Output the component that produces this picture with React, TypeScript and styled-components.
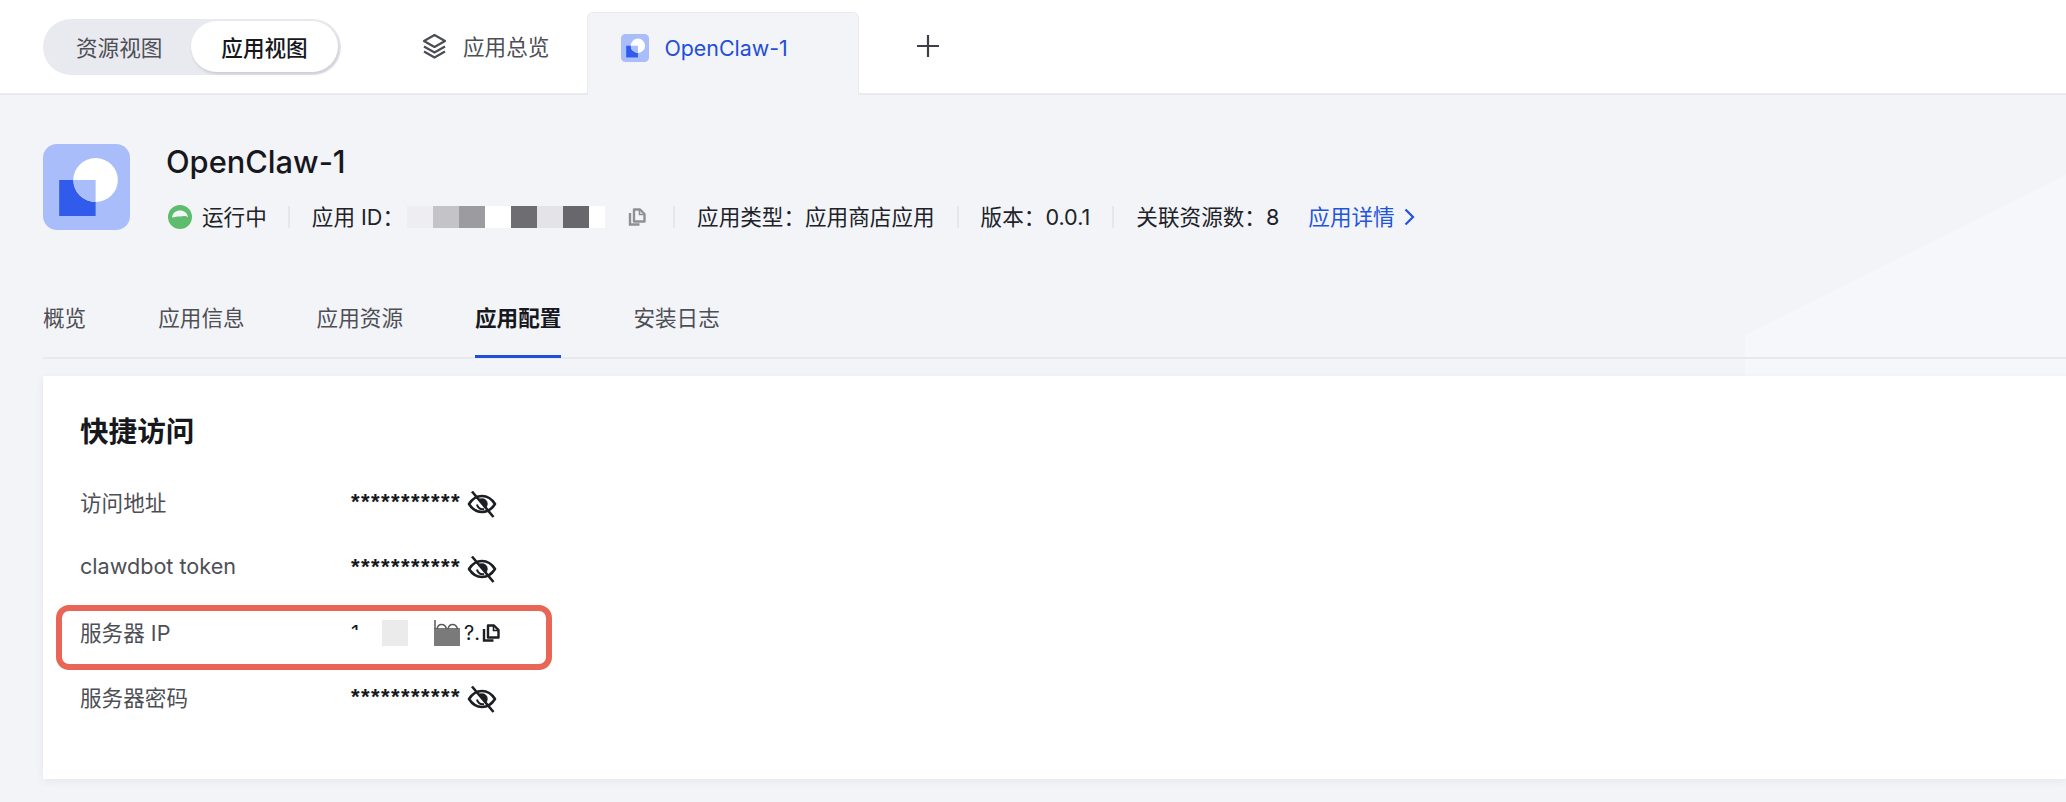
import React from "react";
import styled, { createGlobalStyle } from "styled-components";

const GlobalStyle = createGlobalStyle`
  html, body {
    margin: 0;
    padding: 0;
    background: #f3f4f8;
  }
  body {
    font-family: Inter, "Noto Sans CJK SC", "Noto Sans", sans-serif;
    color: #16181d;
    overflow: hidden;
  }
`;

const Page = styled.div`
  position: relative;
  width: 2066px;
  height: 802px;
  overflow: hidden;
  background: #f3f4f8;
`;

const Decor = styled.div`
  position: absolute;
  left: 0;
  top: 0;
  width: 2066px;
  height: 376px;
  background: #f6f7fb;
  clip-path: polygon(1745px 335px, 2066px 175px, 2066px 376px, 1745px 376px);
`;

const TopBar = styled.header`
  position: relative;
  display: flex;
  align-items: flex-start;
  height: 93px;
  padding-left: 43px;
  background: #fff;
  border-bottom: 2px solid #e9eaef;
`;

const Segment = styled.div`
  display: flex;
  justify-content: space-between;
  align-items: center;
  box-sizing: border-box;
  width: 298px;
  height: 56px;
  margin-top: 19px;
  padding: 2px 3px 3px 33px;
  border-radius: 28px;
  background: #e9eaef;
`;

const SegmentItem = styled.div<{ $active?: boolean }>`
  display: flex;
  align-items: center;
  justify-content: center;
  height: 100%;
  font-size: 21.6px;
  font-weight: ${(p) => (p.$active ? 500 : 400)};
  color: ${(p) => (p.$active ? "#16181d" : "#4d4f55")};
  ${(p) =>
    p.$active &&
    `
    width: 147px;
    border-radius: 26px;
    background: #fff;
    box-shadow: 1px 2px 3px rgba(90, 95, 115, 0.22);
  `}
`;

const NavItem = styled.div`
  display: flex;
  align-items: center;
  gap: 16px;
  height: 91px;
  margin-left: 81px;
  font-size: 21.6px;
  color: #4d4f55;
`;

const Tab = styled.div`
  display: flex;
  align-items: center;
  gap: 15px;
  box-sizing: border-box;
  width: 272px;
  height: 83px;
  margin: 12px 0 -2px 38px;
  padding: 0 0 13px 33px;
  border: 1px solid #e9eaef;
  border-bottom: none;
  border-radius: 6px 6px 0 0;
  background: #f3f4f8;
  font-size: 21.4px;
  color: #1f4fd8;
`;

const AddButton = styled.div`
  display: flex;
  align-items: center;
  height: 92px;
  margin-left: 58px;
  color: #3c3f45;
`;

const Summary = styled.section`
  position: relative;
  display: flex;
  gap: 36px;
  padding: 49px 43px 0;
`;

const SummaryText = styled.div`
  display: flex;
  flex-direction: column;
`;

const AppName = styled.h1`
  margin: 0;
  height: 36px;
  font-size: 30.8px;
  font-weight: 500;
  line-height: 36px;
  color: #16181d;
`;

const MetaRow = styled.div`
  display: flex;
  align-items: center;
  height: 24px;
  margin-top: 25px;
  margin-left: 2px;
  font-size: 21.6px;
  line-height: 24px;
  white-space: nowrap;
`;

const MetaItem = styled.span`
  display: flex;
  align-items: center;
  color: #202227;
`;

const StatusItem = styled(MetaItem)`
  margin-right: -1px;
`;

const Separator = styled.span`
  width: 2px;
  height: 22px;
  margin: 0 22px;
  background: #e6e7ec;
`;

const StatusIcon = styled.svg`
  margin-right: 10px;
`;

const MaskedId = styled.span`
  display: grid;
  grid-template-columns: repeat(7, 26px) 16px;
  height: 22px;
  margin-left: 3px;
`;

const MaskCell = styled.span<{ $color: string }>`
  background: ${(p) => p.$color};
`;

const CopyButton = styled.span<{ $muted?: boolean; $gap: number }>`
  display: inline-flex;
  margin-left: ${(p) => p.$gap}px;
  margin-right: ${(p) => (p.$muted ? 5 : 0)}px;
  color: ${(p) => (p.$muted ? "#8e9096" : "#1c1e22")};
`;

const DetailLink = styled.a`
  display: flex;
  align-items: center;
  gap: 9px;
  margin-left: 29px;
  color: #1f55dc;
`;

const TabNav = styled.nav`
  position: relative;
  display: flex;
  gap: 72px;
  height: 76px;
  margin: 51px 0 0 43px;
  border-bottom: 2px solid #e8e9ee;
`;

const TabLink = styled.a<{ $active?: boolean }>`
  position: relative;
  display: flex;
  align-items: center;
  box-sizing: border-box;
  height: 76px;
  padding-bottom: 5px;
  font-size: 21.6px;
  font-weight: ${(p) => (p.$active ? 600 : 400)};
  color: ${(p) => (p.$active ? "#16181d" : "#4d4f55")};
  ${(p) =>
    p.$active &&
    `
    &::after {
      content: "";
      position: absolute;
      left: 0;
      right: 0;
      bottom: -1px;
      height: 3px;
      background: #1f4fd8;
    }
  `}
`;

const Card = styled.section`
  position: relative;
  box-sizing: border-box;
  height: 403px;
  margin: 17px 0 0 43px;
  padding: 37px 37px 0;
  background: #fff;
  box-shadow: 0 2px 8px rgba(60, 70, 110, 0.07);
`;

const CardTitle = styled.h2`
  margin: 0 0 19px;
  height: 38px;
  font-size: 28.6px;
  font-weight: 600;
  line-height: 38px;
  color: #16181d;
`;

const Row = styled.div`
  display: flex;
  align-items: center;
  height: 65px;
  font-size: 21.6px;
`;

const RowLabel = styled.div`
  width: 271px;
  padding-bottom: 3px;
  color: #4d4f55;
`;

const RowValue = styled.div`
  display: flex;
  align-items: center;
  color: #16181d;
`;

const Stars = styled.span`
  width: 110px;
  margin-bottom: 2px;
  font-family: "Liberation Sans", sans-serif;
  font-size: 22px;
  font-weight: 700;
  letter-spacing: 1.44px;
  line-height: 24px;
  white-space: nowrap;
`;

const EyeButton = styled.span`
  display: inline-flex;
  margin-left: 6px;
  margin-top: 3px;
  color: #1c1e22;
`;

const MaskedIp = styled.span`
  display: grid;
  grid-template-columns: 6px 25px 26px 26px 26px 14px;
  align-items: center;
  width: 123px;
  height: 26px;
`;

// mosaic covers all but the top of the first digit
const IpFragment = styled.span`
  position: relative;
  font-size: 20px;
  line-height: 26px;
  color: #16181d;

  &::after {
    content: "";
    position: absolute;
    left: -1px;
    right: -4px;
    top: 10px;
    bottom: 0;
    background: #fff;
  }
`;

const IpTail = styled.span`
  padding-left: 4px;
  font-size: 20px;
  line-height: 26px;
  white-space: nowrap;
  color: #16181d;
`;

const IpCell = styled.span<{ $color: string }>`
  height: 26px;
  background: ${(p) => p.$color};
`;

const Highlight = styled.div`
  position: absolute;
  left: 13px;
  top: 229px;
  box-sizing: border-box;
  width: 496px;
  height: 65px;
  border: 6px solid #e96555;
  border-radius: 13px;
  pointer-events: none;
`;

const AppLogo = ({ width, height }: { width: number; height: number }) => (
  <svg width={width} height={height} viewBox="0 0 86 86" fill="none" preserveAspectRatio="none">
    <rect width="86" height="86" rx="14" fill="#a9bdfb" />
    <rect x="16" y="36" width="36" height="36" fill="#315bea" />
    <circle cx="52" cy="36" r="22" fill="#fff" />
    <path d="M30 36h22v22a22 22 0 0 1-22-22z" fill="#a9bdfb" />
  </svg>
);

const LayersIcon = () => (
  <svg width="25" height="26" viewBox="0 0 25 26" fill="none" stroke="#4a4d53" strokeWidth="2.2">
    <path d="M12.5 2 23 8 12.5 14 2 8z" strokeLinejoin="round" />
    <path d="M2 13.5 12.5 19.5 23 13.5" />
    <path d="M2 18.5 12.5 24.5 23 18.5" />
  </svg>
);

const PlusIcon = () => (
  <svg width="22" height="22" viewBox="0 0 22 22" stroke="currentColor" strokeWidth="2.2">
    <path d="M11 0v22M0 11h22" />
  </svg>
);

const CopyIcon = ({ size }: { size: number }) => (
  <svg width={size} height={size} viewBox="0 0 18 18" fill="none" stroke="currentColor" strokeWidth="2.4">
    <path d="M6 1.5h6l4.5 4.5v7.5H6z" strokeLinejoin="round" />
    <path d="M2 5v11.5h9.5" />
    <path d="M11.5 1.5v5h5" strokeWidth="1.6" />
  </svg>
);

const EyeOffIcon = () => (
  <svg width="30" height="30" viewBox="0 0 30 30" fill="none" stroke="currentColor">
    <path d="M2 15c3.5-5.5 8-8 13-8s9.5 2.5 13 8c-3.5 5.5-8 8-13 8s-9.5-2.5-13-8z" strokeWidth="2.6" strokeLinejoin="round" />
    <path d="M15 9.5a5.5 5.5 0 0 1 4.5 8.7l-8-7.5a5.5 5.5 0 0 1 3.5-1.2z" fill="currentColor" strokeWidth="0.5" />
    <path d="M10 15.5a5.5 5.5 0 0 0 7 4.5" strokeWidth="2" />
    <path d="M5 2.5 26.5 28" strokeWidth="2.6" />
  </svg>
);

// the part of the address left showing above the dark mosaic cell
const DarkIpCell = () => (
  <svg width="26" height="26" viewBox="0 0 26 26" fill="none">
    <rect y="8" width="26" height="18" fill="#7a7a7a" />
    <path d="M1 0v9M3 9c1-6 8-6 9.5 0M14 9c1-6 8-6 9.5 0" stroke="#5a5a5a" strokeWidth="1.5" />
  </svg>
);

const ID_CELLS = ["#eeeef2", "#c4c4c8", "#9c9ca0", "#ffffff", "#6e6e72", "#e4e4e8", "#68686c", "#ffffff"];
const SECRET_ROWS = ["访问地址", "clawdbot token"];
const TABS = ["概览", "应用信息", "应用资源", "应用配置", "安装日志"];

const SecretRow = ({ label }: { label: string }) => (
  <Row>
    <RowLabel>{label}</RowLabel>
    <RowValue>
      <Stars>***********</Stars>
      <EyeButton>
        <EyeOffIcon />
      </EyeButton>
    </RowValue>
  </Row>
);

export default function App() {
  return (
    <Page>
      <GlobalStyle />
      <Decor />
      <TopBar>
        <Segment>
          <SegmentItem>资源视图</SegmentItem>
          <SegmentItem $active>应用视图</SegmentItem>
        </Segment>
        <NavItem>
          <LayersIcon />
          应用总览
        </NavItem>
        <Tab>
          <AppLogo width={28} height={28} />
          OpenClaw-1
        </Tab>
        <AddButton>
          <PlusIcon />
        </AddButton>
      </TopBar>

      <Summary>
        <AppLogo width={87} height={86} />
        <SummaryText>
          <AppName>OpenClaw-1</AppName>
          <MetaRow>
            <StatusItem>
              <StatusIcon width="24" height="24" viewBox="0 0 24 24">
                <circle cx="12" cy="12" r="12" fill="#5dbd6c" />
                <path d="M4 12.5C4.5 8 8 5.5 12 5.5s7.5 2.5 8 7c-2.5-2.5-5.5-1-8-1s-5.5.5-8 1z" fill="#f3f4f8" />
              </StatusIcon>
              运行中
            </StatusItem>
            <Separator />
            <MetaItem>
              应用 ID：
              <MaskedId>
                {ID_CELLS.map((color, i) => (
                  <MaskCell key={i} $color={color} />
                ))}
              </MaskedId>
              <CopyButton $muted $gap={23}>
                <CopyIcon size={18} />
              </CopyButton>
            </MetaItem>
            <Separator />
            <MetaItem>应用类型：应用商店应用</MetaItem>
            <Separator />
            <MetaItem>版本：0.0.1</MetaItem>
            <Separator />
            <MetaItem>关联资源数：8</MetaItem>
            <DetailLink>
              应用详情
              <svg width="11" height="18" viewBox="0 0 11 18" fill="none" stroke="currentColor" strokeWidth="2.2">
                <path d="M1.5 1.5 9 9l-7.5 7.5" />
              </svg>
            </DetailLink>
          </MetaRow>
        </SummaryText>
      </Summary>

      <TabNav>
        {TABS.map((tab) => (
          <TabLink key={tab} $active={tab === "应用配置"}>
            {tab}
          </TabLink>
        ))}
      </TabNav>

      <Card>
        <CardTitle>快捷访问</CardTitle>
        {SECRET_ROWS.map((label) => (
          <SecretRow key={label} label={label} />
        ))}
        <Row>
          <RowLabel>服务器 IP</RowLabel>
          <RowValue>
            <MaskedIp>
              <IpFragment>1</IpFragment>
              <IpCell $color="#ffffff" />
              <IpCell $color="#ebebeb" />
              <IpCell $color="#ffffff" />
              <DarkIpCell />
              <IpTail>?.</IpTail>
            </MaskedIp>
            <CopyButton $gap={8}>
              <CopyIcon size={18} />
            </CopyButton>
          </RowValue>
        </Row>
        <SecretRow label="服务器密码" />
        <Highlight />
      </Card>
    </Page>
  );
}
